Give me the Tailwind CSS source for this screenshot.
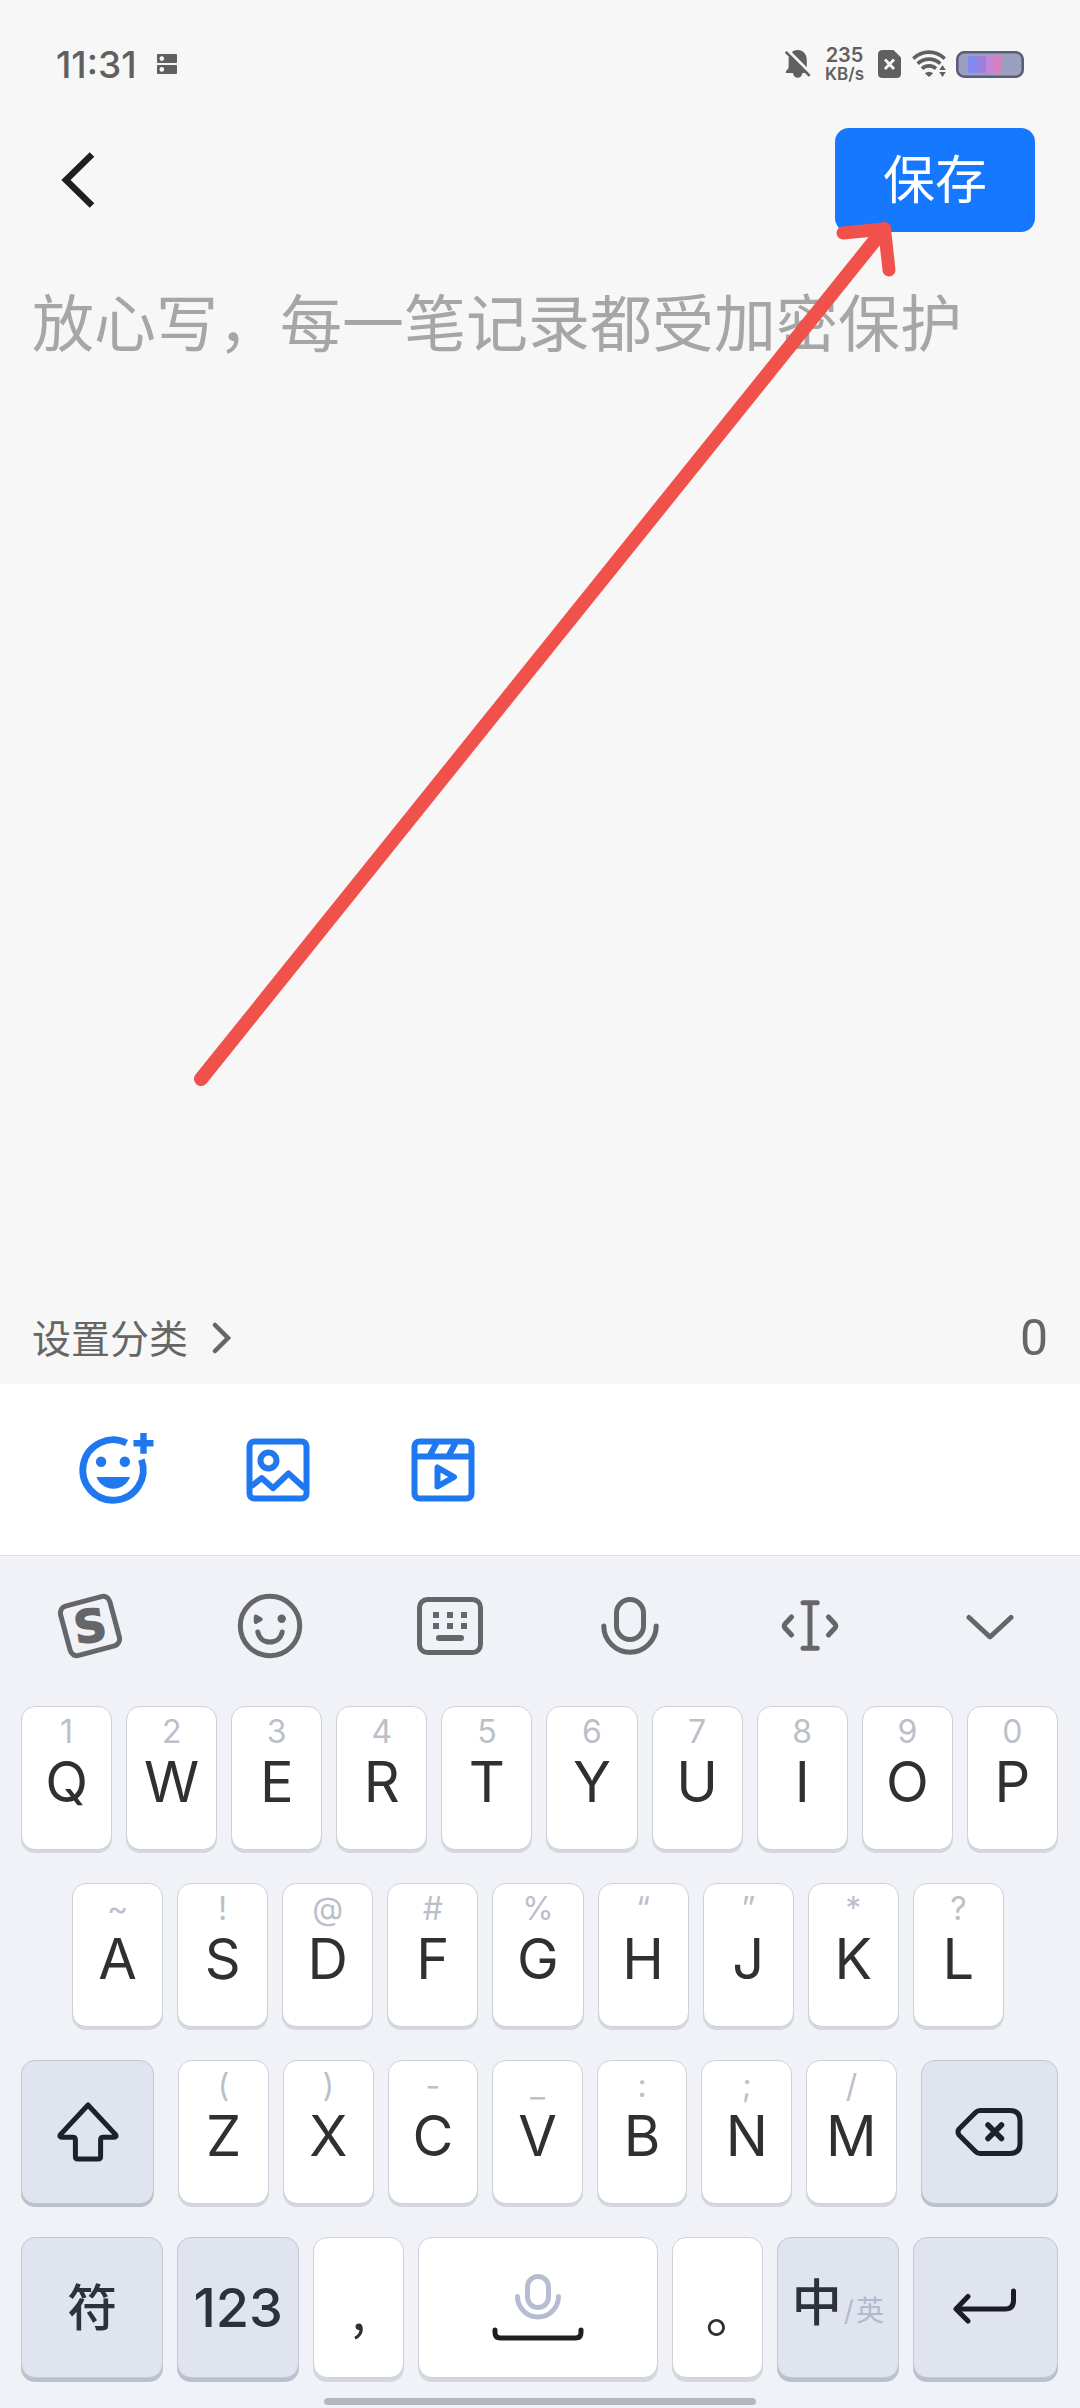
<!DOCTYPE html>
<html lang="zh-CN">

<head>
	<meta charset="UTF-8">
	<meta name="viewport" content="width=device-width, initial-scale=1.0">
	<title>写记录</title>
	<script src="https://cdn.jsdelivr.net/npm/@tailwindcss/browser@4"></script>
</head>

<body class="bg-[#f7f7f7] font-['Inter','Noto_Sans_CJK_SC',sans-serif]">
	<div class="relative min-h-screen flex flex-col">
		<!-- 状态栏 -->
		<div class="h-32 pl-14 pr-14 flex items-center justify-between text-[#606060]">
			<div class="flex items-center gap-5">
				<span class="text-[37px] leading-none font-medium">11:31</span>
				<svg class="w-5 h-5" viewBox="0 0 20 20" fill="currentColor">
					<rect width="20" height="9" rx="1" />
					<rect y="11" width="20" height="9" rx="1" />
					<circle cx="4.8" cy="4.6" r="2.3" fill="#f7f7f7" />
					<circle cx="4.8" cy="15.4" r="2.3" fill="#f7f7f7" />
				</svg>
			</div>
			<div class="flex items-center">
				<svg class="w-[26px] h-[30px] mr-3.5" viewBox="0 0 26 30" fill="currentColor">
					<path d="M12.7 1C7 1 3.6 5.5 3.6 11V19L.8 22.5V24H24.6V22.5L21.8 19V11C21.8 5.5 18.4 1 12.7 1Z" />
					<path d="M8 24C8.4 27 10.2 28.8 12.7 28.8S17 27 17.4 24Z" />
					<path d="M2.5 1L26 24.5" stroke="#f7f7f7" stroke-width="3" />
					<path d="M.7 2.8L24.7 26.8" stroke="currentColor" stroke-width="2.6" />
				</svg>
				<div class="text-center font-semibold">
					<div class="text-[20px] leading-[20px]">235</div>
					<div class="text-[17px] leading-[18px]">KB/s</div>
				</div>
				<svg class="w-6 h-7 ml-3.5" viewBox="0 0 24 28">
					<path d="M4.5 0H15.5L23 7.5V23.5Q23 28 18.5 28H4.5Q0 28 0 23.5V4.5Q0 0 4.5 0Z" fill="currentColor" />
					<path d="M7 9.5L16 19M16 9.5L7 19" stroke="#f7f7f7" stroke-width="2.8" />
				</svg>
				<svg class="w-9 h-7 ml-2.5" viewBox="0 0 36 28" fill="none" stroke="currentColor" stroke-width="3.6">
					<path d="M1.3 8.6C10.5 0 23.5 0 32.7 8.6" />
					<path d="M5.6 13.6C12.4 7.6 21.6 7.6 28.4 13.6" />
					<path d="M10 18.6C14 15 20 15 24 18.6" />
					<path d="M17 27L12.8 23.2Q17 20.2 21.2 23.2Z" fill="currentColor" stroke="none" />
					<path d="M30.5 15L33.8 20H27.2ZM30.5 27L33.8 22H27.2Z" fill="currentColor" stroke="none" />
				</svg>
				<svg class="w-[68px] h-[27px] ml-2" viewBox="0 0 68 27">
					<rect x="1.3" y="1.3" width="65.4" height="24.4" rx="7" fill="#9ba0c0" />
					<rect x="12" y="5" width="10" height="17" fill="#8489f0" />
					<rect x="22" y="5" width="8" height="17" fill="#9d80da" />
					<rect x="30" y="5" width="8" height="17" fill="#c086d8" />
					<rect x="38" y="5" width="7" height="17" fill="#d681c0" />
					<rect x="1.3" y="1.3" width="65.4" height="24.4" rx="7" fill="none" stroke="#5b5c78" stroke-width="2.6" />
				</svg>
			</div>
		</div>

		<!-- 顶部操作 -->
		<header class="h-[104px] pl-[60px] pr-[45px] flex items-center justify-between">
			<button aria-label="返回">
				<svg class="w-9 h-14" viewBox="0 0 36 56" fill="none" stroke="#1f1f1f" stroke-width="6.5">
					<path d="M32 2.5L6 28L32 53.5" />
				</svg>
			</button>
			<button class="w-[200px] h-[104px] pt-0.5 rounded-[14px] bg-[#1677ff] text-white text-[52px] leading-none">保存</button>
		</header>

		<!-- 正文输入 -->
		<textarea aria-label="记录内容"
			class="flex-1 px-8 pt-[53px] text-[62px] leading-[80px] text-[#333333] placeholder:text-[#a6a6a6] resize-none overflow-hidden focus:outline-none"
			placeholder="放心写，每一笔记录都受加密保护"></textarea>

		<div class="h-[92px] px-8 flex items-center justify-between text-[#666666]">
			<button class="flex items-center gap-6 text-[39px] leading-none">
				设置分类
				<svg class="w-5 h-8" viewBox="0 0 20 32" fill="none" stroke="currentColor" stroke-width="4.5" stroke-linecap="round">
					<path d="M3 3L16 16L3 29" />
				</svg>
			</button>
			<span class="font-['Roboto',sans-serif] text-[50px] leading-none">0</span>
		</div>

		<!-- 插入工具 -->
		<div class="h-[171px] pl-[30px] bg-white flex items-center text-[#1f78f0]">
			<button class="w-[165px] flex justify-center" aria-label="心情">
				<svg class="w-[82px] h-[82px]" viewBox="-6.5 -2.7 82 82" fill="currentColor">
					<path d="M48 11.3A30.2 30.2 0 1 0 62.9 28" fill="none" stroke="currentColor" stroke-width="6.8" />
					<path d="M61.8 1.3H68.2V8.3H75V14.7H68.2V22H61.8V14.7H55V8.3H61.8Z" />
					<circle cx="22.6" cy="30" r="5.2" />
					<circle cx="46.3" cy="30" r="5.2" />
					<path d="M18 45.3H51.5C49 52 43 57 34.8 57S20.5 52 18 45.3Z" />
				</svg>
			</button>
			<button class="w-[165px] flex justify-center" aria-label="图片">
				<svg class="w-16 h-16" viewBox="0 0 64 64" fill="none" stroke="currentColor" stroke-width="6">
					<rect x="3.5" y="3.5" width="57" height="57" rx="5" />
					<circle cx="22.5" cy="22.5" r="8" />
					<path d="M5 48.5L15.7 40L27.2 50.2L42.5 35.5L59 50.5" stroke-linejoin="round" />
				</svg>
			</button>
			<button class="w-[165px] flex justify-center" aria-label="视频">
				<svg class="w-16 h-16" viewBox="0 0 64 64" fill="none" stroke="currentColor" stroke-width="6">
					<rect x="3.5" y="3.5" width="57" height="57" rx="5" />
					<path d="M4 18.5H60M25.5 5L18.5 18M44.5 5L37.5 18" />
					<path d="M26.5 29.5V48.5L43 39Z" stroke-linejoin="round" />
				</svg>
			</button>
		</div>

		<!-- 键盘 -->
		<div class="border-t border-[#dcdde0] bg-[#f1f2f7]">
			<div class="h-[140px] grid grid-cols-6 text-[#65666a]">
				<button class="flex items-center justify-center" aria-label="搜狗输入法">
					<svg class="w-[68px] h-[68px]" viewBox="0 0 68 68" fill="none" stroke="currentColor" stroke-width="5">
						<rect x="8.5" y="8.5" width="51" height="51" rx="7" transform="rotate(-15 34 34)" />
						<text x="34" y="50" text-anchor="middle" transform="rotate(-8 34 34)" fill="currentColor" stroke="currentColor" stroke-width="1.5"
							class="font-['DejaVu_Sans',sans-serif] font-bold text-[45px]">S</text>
					</svg>
				</button>
				<button class="flex items-center justify-center" aria-label="表情">
					<svg class="w-[66px] h-[66px]" viewBox="0 0 66 66" fill="none" stroke="currentColor" stroke-width="5" stroke-linecap="round" stroke-linejoin="round">
						<circle cx="33" cy="33" r="29.7" />
						<path d="M18.8 23.6L23.6 26.3L18.8 29Z" fill="currentColor" stroke-width="4" />
						<circle cx="44.7" cy="25.8" r="4.2" fill="currentColor" stroke="none" />
						<path d="M20.8 39C22.2 45.5 27 49 32.9 49S43.8 45.5 45.2 39" />
					</svg>
				</button>
				<button class="flex items-center justify-center" aria-label="键盘">
					<svg class="w-[66px] h-[58px]" viewBox="0 0 66 58" fill="none" stroke="currentColor" stroke-width="5">
						<rect x="2.5" y="2.5" width="61" height="53" rx="8" />
						<path d="M19 15V21M33 15V21M47 15V21M19 26V32M33 26V32M47 26V32" stroke-width="6" />
						<path d="M22 41H44" stroke-width="6" stroke-linecap="round" />
					</svg>
				</button>
				<button class="flex items-center justify-center" aria-label="语音">
					<svg class="w-[58px] h-[58px]" viewBox="0 0 58 58" fill="none" stroke="currentColor" stroke-width="5" stroke-linecap="round">
						<rect x="15.5" y="2.5" width="27" height="40" rx="13.5" />
						<path d="M2.8 29A26.2 26.2 0 0 0 55.2 29" />
					</svg>
				</button>
				<button class="flex items-center justify-center" aria-label="移动光标">
					<svg class="w-[58px] h-[58px]" viewBox="0 0 58 58" fill="none" stroke="currentColor" stroke-width="5" stroke-linecap="round" stroke-linejoin="round">
						<path d="M22 5.8H36.2M29 5.8V51.2M22 51.2H36.2" />
						<path d="M10.5 20L4 27Q2.5 29 4 31L10.5 38" />
						<path d="M47.5 20L54 27Q55.5 29 54 31L47.5 38" />
					</svg>
				</button>
				<button class="flex items-center justify-center" aria-label="收起键盘">
					<svg class="w-12 h-12" viewBox="0 0 48 48" fill="none" stroke="currentColor" stroke-width="5" stroke-linecap="round" stroke-linejoin="round">
						<path d="M3 15.5L24 35L45 15.5" />
					</svg>
				</button>
			</div>

			<div class="pt-2.5 flex flex-col gap-[33px] text-[#303031]">
				<div id="row-1" class="h-36 pl-[21px] pr-[22px] flex gap-3.5"></div>
				<div id="row-2" class="h-36 pl-[72px] pr-[76px] flex gap-3.5"></div>
				<div class="h-36 pl-[21px] pr-[22px] flex gap-6">
					<button aria-label="大写" class="flex-[132] flex items-center justify-center rounded-[14px] border border-[#c3c7d2] bg-[#dfe4ef] shadow-[0_3px_0_#bac0cd]">
						<svg class="w-[62px] h-[60px]" viewBox="0 0 62 60" fill="none" stroke="#1c212b" stroke-width="5" stroke-linejoin="round">
							<path d="M31 3L3.4 32.6Q2 35.2 5 35.2H15.5Q18.4 35.2 18.4 38V54.5Q18.4 57 21 57H41Q43.6 57 43.6 54.5V38Q43.6 35.2 46.5 35.2H57Q60 35.2 58.6 32.6Z" />
						</svg>
					</button>
					<div id="row-3" class="flex-[722] flex gap-3.5"></div>
					<button aria-label="删除" class="flex-[136] flex items-center justify-center rounded-[14px] border border-[#c3c7d2] bg-[#dfe4ef] shadow-[0_3px_0_#bac0cd]">
						<svg class="w-[68px] h-12" viewBox="0 0 68 48" fill="none" stroke="#1c212b" stroke-width="5" stroke-linecap="round">
							<path d="M25 2.5H55Q65 2.5 65 12.5V35.5Q65 45.5 55 45.5H25Q22.5 45.5 20.5 43.5L4 27Q2 24 4 21L20.5 4.5Q22.5 2.5 25 2.5Z" />
							<path d="M33 17L46.5 30.5M46.5 17L33 30.5" stroke-width="5.5" />
						</svg>
					</button>
				</div>
				<div class="h-[141px] pl-[21px] pr-[22px] flex gap-3.5">
					<button class="flex-[143] rounded-[14px] border border-[#c3c7d2] bg-[#dfe4ef] shadow-[0_4px_0_#bac0cd] text-[50px] leading-none font-medium text-[#2d3139]">符</button>
					<button class="flex-[122] rounded-[14px] border border-[#c3c7d2] bg-[#dfe4ef] shadow-[0_4px_0_#bac0cd] text-[54px] leading-none font-medium text-[#2d3139]">123</button>
					<button class="flex-[91] rounded-[14px] border border-[#cfd1d9] bg-white shadow-[0_4px_0_#d3d7df] font-['Noto_Sans_CJK_SC',sans-serif] text-[50px] leading-none">,</button>
					<button aria-label="空格" class="flex-[242] flex items-center justify-center rounded-[14px] border border-[#cfd1d9] bg-white shadow-[0_4px_0_#d3d7df]">
						<svg class="w-[92px] h-[68px]" viewBox="0 0 92 68" fill="none" stroke-width="5" stroke-linecap="round">
							<g stroke="#b7bdd1">
								<rect x="35.5" y="2.5" width="21" height="31" rx="10.5" />
								<path d="M25.5 22.5A20.5 20.5 0 0 0 66.5 22.5" />
							</g>
							<path d="M3 56V58.5Q3 64 8.5 64H83.5Q89 64 89 58.5V56" stroke="#1f1f22" />
						</svg>
					</button>
					<button class="flex-[91] pt-2 rounded-[14px] border border-[#cfd1d9] bg-white shadow-[0_4px_0_#d3d7df] text-[56px] leading-none">
						<span class="pl-8">。</span>
					</button>
					<button class="flex-[122] flex items-baseline justify-center gap-0.5 pt-10 rounded-[14px] border border-[#c3c7d2] bg-[#dfe4ef] shadow-[0_4px_0_#bac0cd] text-[28px] leading-none text-[#b4bacb]">
						<span class="text-[50px] leading-none font-medium text-[#2d3139]">中</span>/<span>英</span>
					</button>
					<button aria-label="换行" class="flex-[146] flex items-center justify-center rounded-[14px] border border-[#c3c7d2] bg-[#dfe4ef] shadow-[0_4px_0_#bac0cd]">
						<svg class="w-16 h-10" viewBox="0 0 64 40" fill="none" stroke="#1c1c26" stroke-width="5" stroke-linecap="round" stroke-linejoin="round">
							<path d="M60.5 3V12.5Q60.5 21 52 21H4" />
							<path d="M15 8.5L3 21L15 33" />
						</svg>
					</button>
				</div>
			</div>

			<div class="w-2/5 h-[7px] mt-5 mb-[3px] mx-auto rounded-full bg-[#b6b8be]"></div>
		</div>

		<!-- 指向保存按钮的箭头 -->
		<svg class="absolute top-0 right-0 w-[1080px] h-[1100px] pointer-events-none" viewBox="0 0 1080 1100" fill="none" stroke="#f0524b" stroke-linecap="round" stroke-linejoin="round">
			<path d="M201 1079L884 229" stroke-width="14" />
			<path d="M843 233L884.5 229L889 270" stroke-width="13" />
		</svg>
	</div>

	<script>
		// 每个按键：主字符 + 上方小字符
		const rows = {
			'row-1': ['Q1', 'W2', 'E3', 'R4', 'T5', 'Y6', 'U7', 'I8', 'O9', 'P0'],
			'row-2': ['A~', 'S!', 'D@', 'F#', 'G%', 'H“', 'J”', 'K*', 'L?'],
			'row-3': ['Z(', 'X)', 'C-', 'V_', 'B:', 'N;', 'M/']
		};

		for (const id in rows) {
			document.getElementById(id).innerHTML = rows[id].map(([letter, hint]) => `
				<button class="flex-1 pt-[9px] flex flex-col items-center rounded-[14px] border border-[#cfd1d9] bg-white shadow-[0_3px_0_#d3d7df]">
					<span class="text-[32px] leading-[32px] text-[#bcbfca]">${hint}</span>
					<span class="mt-1.5 text-[56px] leading-[56px]">${letter}</span>
				</button>
			`).join('');
		}
	</script>
</body>

</html>
